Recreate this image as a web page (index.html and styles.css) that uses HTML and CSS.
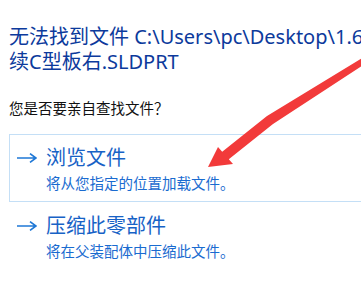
FILE: index.html
```html
<!DOCTYPE html>
<html lang="zh-CN">
<head>
  <meta charset="UTF-8" />
  <title>SOLIDWORKS - 无法找到文件</title>
  <link rel="stylesheet" href="styles.css">
</head>
<body>
  <div class="dialog">
    <h1 class="main-instruction">无法找到文件 C:\Users\pc\Desktop\1.6<br>续C型板右.SLDPRT</h1>

    <p class="question">您是否要亲自查找文件？</p>

    <div class="command-link active">
      <svg class="link-arrow" width="20" height="10" viewBox="0 0 20 10">
        <path d="M0 5 H19 M13 0.6 L19 5 L13 9.4" fill="none" stroke="#1f78d6" stroke-width="1.6"/>
      </svg>
      <div class="link-text">
        <div class="link-title">浏览文件</div>
        <div class="link-note">将从您指定的位置加载文件。</div>
      </div>
    </div>

    <div class="command-link">
      <svg class="link-arrow" width="20" height="10" viewBox="0 0 20 10">
        <path d="M0 5 H19 M13 0.6 L19 5 L13 9.4" fill="none" stroke="#1f78d6" stroke-width="1.6"/>
      </svg>
      <div class="link-text">
        <div class="link-title">压缩此零部件</div>
        <div class="link-note">将在父装配体中压缩此文件。</div>
      </div>
    </div>
  </div>

  <!-- red annotation arrow drawn over the screenshot -->
  <svg class="annotation" width="361" height="285" viewBox="0 0 361 285">
    <polygon fill="#f23a3a" points="364,57 267,116 222.2,151.8 218,147 208,167 233,164 228.8,159.2 273,124 368,62"/>
  </svg>
</body>
</html>
```

FILE: styles.css
```css
html, body {
  margin: 0;
  overflow: hidden;
  background: #fff;
}

body {
  width: 361px;
  height: 285px;
  position: relative;
  font-family: "Noto Sans", "Noto Sans CJK SC", sans-serif;
}

.dialog {
  width: 440px;
  padding: 24px 0 0 9px;
}

.main-instruction {
  margin: 0;
  font-size: 20px;
  line-height: 25px;
  font-weight: normal;
  color: #0c3a9c;
  white-space: nowrap;
}

.question {
  margin: 24px 0 0;
  font-size: 14.5px;
  line-height: 20px;
  color: #111;
}

.command-link {
  display: flex;
  align-items: flex-start;
  border: 1px solid transparent;
  padding: 11px 0 8px 7px;
}

.command-link.active {
  margin-top: 16px;
  border-color: #c4dff6;
}

.link-arrow {
  flex: none;
  margin-top: 7px;
  margin-right: 9px;
}

.link-title {
  font-size: 20px;
  line-height: 24px;
  color: #1762c6;
}

.link-note {
  margin-top: 3px;
  font-size: 14.5px;
  line-height: 20px;
  color: #1a6bd0;
}

.annotation {
  position: absolute;
  left: 0;
  top: 0;
}
```
